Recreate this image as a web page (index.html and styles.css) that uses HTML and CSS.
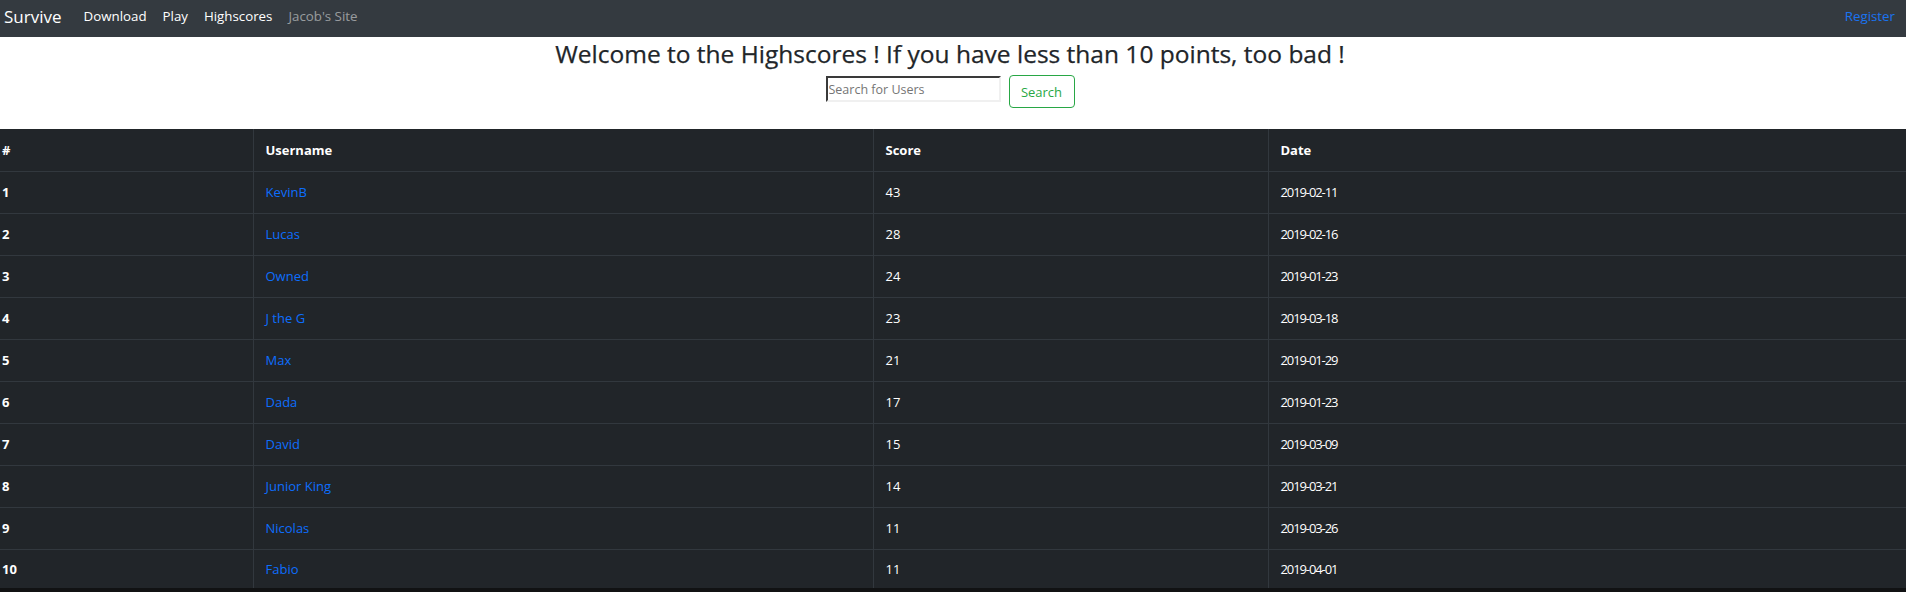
FILE: index.html
```html
<!DOCTYPE html>
<html lang="en">
<head>
<meta charset="utf-8">
<title>Survive - Highscores</title>
<link rel="stylesheet" href="styles.css">
</head>
<body>
<nav class="navbar">
  <a class="brand" href="#">Survive</a>
  <ul class="nav-links">
    <li><a class="nav-link" href="#">Download</a></li>
    <li><a class="nav-link" href="#">Play</a></li>
    <li><a class="nav-link" href="#">Highscores</a></li>
    <li><a class="nav-link muted" href="#">Jacob's Site</a></li>
  </ul>
  <a class="nav-link register" href="#">Register</a>
</nav>
<section class="hero">
  <h4 class="title">Welcome to the Highscores ! If you have less than 10 points, too bad !</h4>
  <form class="search">
    <input class="search-input" type="text" placeholder="Search for Users">
    <button class="search-btn" type="button">Search</button>
  </form>
</section>
<table class="scores">
  <colgroup>
    <col class="c1"><col class="c2"><col class="c3"><col class="c4">
  </colgroup>
  <thead>
    <tr><th>#</th><th>Username</th><th>Score</th><th>Date</th></tr>
  </thead>
  <tbody>
    <tr><th>1</th><td><a href="#">KevinB</a></td><td>43</td><td class="date">2019-02-11</td></tr>
    <tr><th>2</th><td><a href="#">Lucas</a></td><td>28</td><td class="date">2019-02-16</td></tr>
    <tr><th>3</th><td><a href="#">Owned</a></td><td>24</td><td class="date">2019-01-23</td></tr>
    <tr><th>4</th><td><a href="#">J the G</a></td><td>23</td><td class="date">2019-03-18</td></tr>
    <tr><th>5</th><td><a href="#">Max</a></td><td>21</td><td class="date">2019-01-29</td></tr>
    <tr><th>6</th><td><a href="#">Dada</a></td><td>17</td><td class="date">2019-01-23</td></tr>
    <tr><th>7</th><td><a href="#">David</a></td><td>15</td><td class="date">2019-03-09</td></tr>
    <tr><th>8</th><td><a href="#">Junior King</a></td><td>14</td><td class="date">2019-03-21</td></tr>
    <tr><th>9</th><td><a href="#">Nicolas</a></td><td>11</td><td class="date">2019-03-26</td></tr>
    <tr><th>10</th><td><a href="#">Fabio</a></td><td>11</td><td class="date">2019-04-01</td></tr>
  </tbody>
</table>
</body>
</html>
```
FILE: styles.css
```css
* { box-sizing: border-box; }
html, body { margin: 0; padding: 0; }
body {
  background: #111213;
  font-family: "Open Sans", "Noto Sans", sans-serif;
  color: #212529;
}
a { text-decoration: none; }

.navbar {
  display: flex;
  align-items: center;
  height: 37px;
  padding: 0 3px 0 4px;
  background: #343a40;
}
.brand {
  color: #fff;
  font-size: 17px;
  margin-right: 14px;
  line-height: 1;
  padding-bottom: 4px;
}
.nav-links {
  display: flex;
  list-style: none;
  margin: 0;
  padding: 0;
  flex: 1;
}
.nav-link {
  display: block;
  color: #fff;
  font-size: 13.3px;
  padding: 0 8px 4px;
  line-height: 1;
}
.nav-link.muted { color: rgba(255,255,255,.5); }
.nav-link.register { color: #1a73f0; }

.hero {
  background: #fff;
  text-align: center;
  height: 92px;
  padding-top: 2px;
}
.title {
  margin: 0;
  font-size: 24.5px;
  font-weight: 500;
  line-height: 30px;
  color: #212529;
  padding-right: 6px;
  -webkit-text-stroke: 0.25px #212529;
}
.search {
  display: flex;
  justify-content: center;
  align-items: flex-start;
  gap: 8px;
  margin-top: 6px;
  padding-right: 6px;
}
.search-input {
  width: 175px;
  height: 26px;
  margin-top: 1px;
  font-family: inherit;
  font-size: 12.5px;
  padding: 1px 1px;
  border: 2px inset #eee;
  border-color: #8e8e8e #f0f0f0 #f0f0f0 #8e8e8e;
  color: #333;
}
.search-input::placeholder { color: #757575; }
.search-btn {
  width: 66px;
  height: 33px;
  font-family: inherit;
  font-size: 13px;
  color: #28a745;
  background: #fff;
  border: 1px solid #28a745;
  border-radius: 4px;
  padding: 0;
}

.scores {
  width: 100%;
  border-collapse: collapse;
  background: #212529;
  color: #fff;
  font-size: 13px;
}
.c1 { width: 253px; }
.c2 { width: 620px; }
.c3 { width: 395px; }
.scores th, .scores td {
  height: 42px;
  padding: 0 12px;
  text-align: left;
  vertical-align: middle;
  border-top: 1px solid #32383e;
  border-left: 1px solid #32383e;
}
.scores tbody tr:last-child > * { height: 39px; }
.scores tr > :first-child { border-left: 0; padding-left: 2px; }
.scores thead th { border-top: 0; }
.scores th { font-weight: 700; }
.scores td { font-weight: 400; }
.scores td.date { letter-spacing: -1.1px; }
.scores a { color: #0d6efd; }
```
